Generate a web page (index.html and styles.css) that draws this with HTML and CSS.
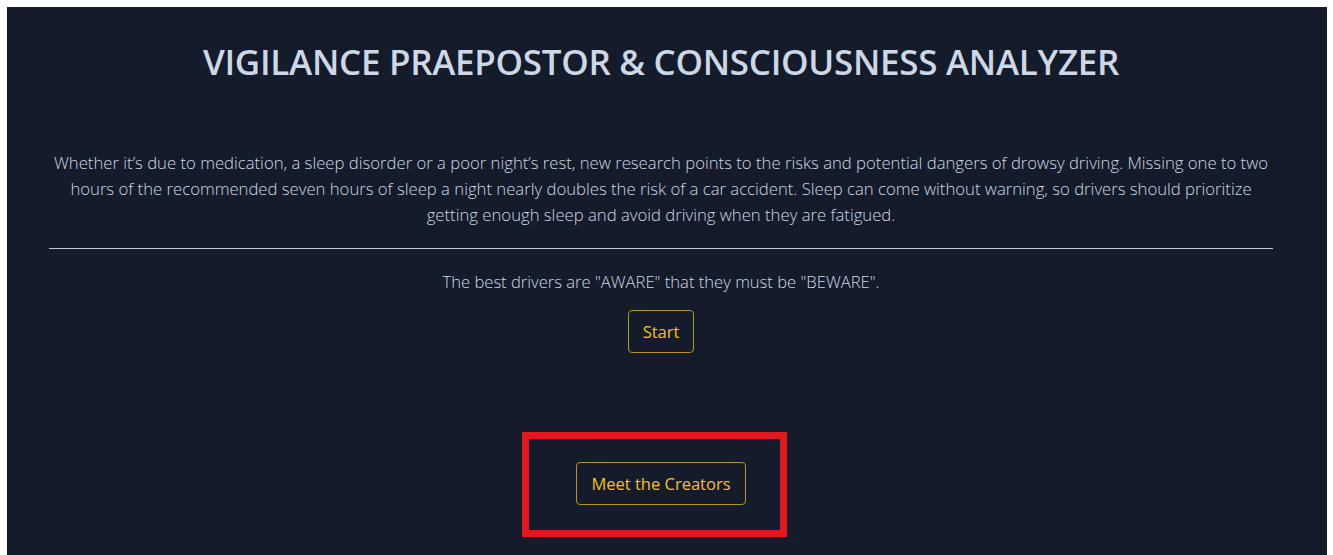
FILE: index.html
```html
<!DOCTYPE html>
<html lang="en">
<head>
<meta charset="utf-8">
<title>Vigilance Praepostor &amp; Consciousness Analyzer</title>
<link rel="stylesheet" href="styles.css">
</head>
<body>
  <main class="page">
    <header class="hero">
      <h1 class="title">VIGILANCE PRAEPOSTOR &amp; CONSCIOUSNESS ANALYZER</h1>
    </header>
    <section class="intro">
      <p class="lead">Whether it’s due to medication, a sleep disorder or a poor night’s rest, new research points to the risks and potential dangers of drowsy driving. Missing one to two hours of the recommended seven hours of sleep a night nearly doubles the risk of a car accident. Sleep can come without warning, so drivers should prioritize getting enough sleep and avoid driving when they are fatigued.</p>
      <hr class="divider">
      <p class="motto">The best drivers are "AWARE" that they must be "BEWARE".</p>
      <button class="btn" type="button">Start</button>
    </section>
    <section class="creators">
      <div class="highlight">
        <button class="btn" type="button">Meet the Creators</button>
      </div>
    </section>
  </main>
</body>
</html>
```
FILE: styles.css
```css
html, body {
  height: 100%;
}

body {
  margin: 7px 6px 0 7px;
  background: #ffffff;
  font-family: "Open Sans", "Noto Sans", sans-serif;
  overflow: hidden;
}

.page {
  min-height: 100%;
  background: #141b2a;
  padding: 0 54px 0 42px;
  display: flex;
  flex-direction: column;
  align-items: center;
  color: #c3cbd8;
}

.hero {
  padding-top: 33px;
  height: 143px;
  box-sizing: border-box;
}

.title {
  margin: 0;
  font-size: 35px;
  font-weight: 600;
  line-height: 44px;
  color: #cdd7e5;
  letter-spacing: -0.3px;
}

.intro {
  width: 100%;
  display: flex;
  flex-direction: column;
  align-items: center;
}

.lead {
  margin: 0;
  text-align: center;
  font-size: 16.7px;
  font-weight: 300;
  line-height: 26px;
  color: #d0d7e2;
}

.divider {
  width: 100%;
  margin: 20px 0 0;
  border: 0;
  border-top: 1px solid #c4cad3;
}

.motto {
  margin: 20px 0 0;
  font-size: 16.6px;
  font-weight: 300;
  line-height: 26px;
  color: #d0d7e2;
}

.btn {
  margin-top: 15px;
  height: 43px;
  padding: 0 14px;
  background: transparent;
  border: 1px solid #b59422;
  border-radius: 4px;
  color: #f2c318;
  font-family: inherit;
  font-size: 16.5px;
  font-weight: 500;
  cursor: pointer;
}

.creators {
  margin-top: 79px;
}

/* red frame drawn around the creators link */
.highlight {
  border: 7px solid #e3171e;
  padding: 23px 34px 25px 47px;
  margin-right: 13px;
}

.highlight .btn {
  margin-top: 0;
  display: block;
}
```
